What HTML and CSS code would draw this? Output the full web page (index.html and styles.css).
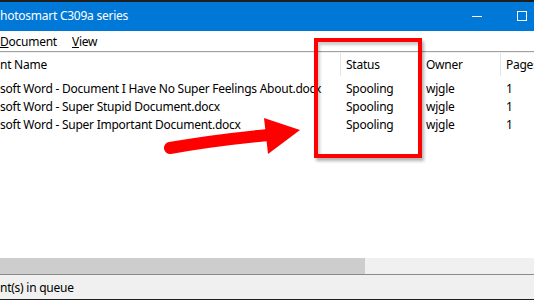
FILE: index.html
```html
<!DOCTYPE html>
<html lang="en">
<head>
    <meta charset="UTF-8">
    <meta name="viewport" content="width=device-width, initial-scale=1.0">
    <title>Print Queue</title>
    <link rel="stylesheet" href="styles.css">
</head>
<body>
    <div class="window">
        <div class="title-bar">
            <span class="title-text">hotosmart C309a series</span>
            <div class="title-buttons">
                <span class="btn-min"></span>
                <span class="btn-max"></span>
            </div>
        </div>

        <div class="menu-bar">
            <span class="menu-item"><u>D</u>ocument</span>
            <span class="menu-item"><u>V</u>iew</span>
        </div>

        <div class="list">
            <div class="list-row list-header">
                <div class="col col-name">nt Name</div>
                <div class="col col-status">Status</div>
                <div class="col col-owner">Owner</div>
                <div class="col col-pages">Pages</div>
            </div>
            <div class="list-body">
                <div class="list-row">
                    <div class="col col-name">soft Word - Document I Have No Super Feelings About.docx</div>
                    <div class="col col-status">Spooling</div>
                    <div class="col col-owner">wjgle</div>
                    <div class="col col-pages">1</div>
                </div>
                <div class="list-row">
                    <div class="col col-name">soft Word - Super Stupid Document.docx</div>
                    <div class="col col-status">Spooling</div>
                    <div class="col col-owner">wjgle</div>
                    <div class="col col-pages">1</div>
                </div>
                <div class="list-row">
                    <div class="col col-name">soft Word - Super Important Document.docx</div>
                    <div class="col col-status">Spooling</div>
                    <div class="col col-owner">wjgle</div>
                    <div class="col col-pages">1</div>
                </div>
            </div>

            <!-- annotation over the list -->
            <div class="highlight-box"></div>
            <svg class="arrow" width="534" height="200" viewBox="0 0 534 200">
                <path d="M170 95 Q215 87 268 82" stroke="#ff0000" stroke-width="12" stroke-linecap="round" fill="none"/>
                <polygon points="264,65 300,77 268,101" fill="#ff0000"/>
            </svg>
        </div>

        <div class="scrollbar">
            <div class="scroll-thumb"></div>
        </div>

        <div class="status-bar">nt(s) in queue</div>
    </div>
</body>
</html>
```

FILE: styles.css
```css
body {
    margin: 0;
    font-family: "Noto Sans", "Segoe UI", sans-serif;
    font-size: 12px;
    letter-spacing: -0.25px;
    color: #000000;
    background-color: #ffffff;
}

.window {
    width: 534px;
    height: 300px;
    display: flex;
    flex-direction: column;
    overflow: hidden;
}

.title-bar {
    height: 29px;
    border-top: 2px solid #1f1f1f;
    background-color: #0078d7;
    color: #ffffff;
    display: flex;
    align-items: center;
    justify-content: space-between;
    flex-shrink: 0;
}

.title-text {
    padding-bottom: 2px;
}

.title-buttons {
    display: flex;
    align-items: center;
    gap: 35px;
    padding-right: 7px;
}

.btn-min {
    width: 10px;
    height: 1px;
    background-color: #ffffff;
}

.btn-max {
    width: 8px;
    height: 8px;
    border: 1px solid #ffffff;
    margin-bottom: 1px;
}

.menu-bar {
    height: 20px;
    display: flex;
    align-items: center;
    gap: 15px;
    border-bottom: 1px solid #a0a0a0;
    flex-shrink: 0;
}

.list {
    flex: 1;
    position: relative;
    border-top: 1px solid #f0f0f0;
}

.list-row {
    display: flex;
    height: 18px;
    align-items: center;
}

.list-header {
    height: 23px;
    margin-bottom: 3px;
}

.list-header .col {
    height: 100%;
    display: flex;
    align-items: center;
}

.col {
    flex-shrink: 0;
    white-space: nowrap;
    overflow: hidden;
    box-sizing: border-box;
    border-left: 1px solid transparent;
}

.list-header .col-status,
.list-header .col-owner,
.list-header .col-pages {
    border-left-color: #e5e5e5;
}

.col-name {
    width: 340px;
    border-left: none;
}

.col-status,
.col-owner,
.col-pages {
    width: 80px;
    padding-left: 5px;
}

.highlight-box {
    position: absolute;
    left: 314px;
    top: -15px;
    width: 108px;
    height: 120px;
    box-sizing: border-box;
    border: 4px solid #ff0000;
    box-shadow: 2px 3px 3px rgba(0, 0, 0, 0.3), inset 2px 3px 3px rgba(0, 0, 0, 0.2);
}

.arrow {
    position: absolute;
    left: 0;
    top: 0;
    pointer-events: none;
}

.scrollbar {
    height: 16px;
    background-color: #f0f0f0;
    flex-shrink: 0;
}

.scroll-thumb {
    width: 365px;
    height: 100%;
    background-color: #cdcdcd;
}

.status-bar {
    height: 23px;
    border-top: 1px solid #8a8a8a;
    border-bottom: 1px solid #1f1f1f;
    background-color: #f0f0f0;
    display: flex;
    align-items: center;
    padding-top: 1px;
    flex-shrink: 0;
}
```
